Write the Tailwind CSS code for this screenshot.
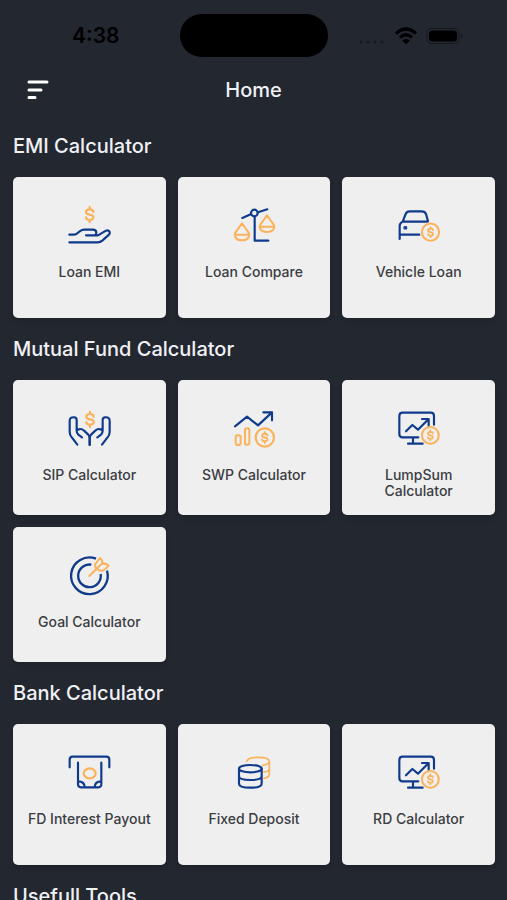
<!DOCTYPE html>
<html lang="en">
<head>
<meta charset="utf-8">
<meta name="viewport" content="width=device-width, initial-scale=1">
<title>Home</title>
<script src="https://cdn.jsdelivr.net/npm/@tailwindcss/browser@4"></script>
</head>
<body class="flex h-screen flex-col overflow-hidden bg-[#232730] font-['Inter','Liberation_Sans',sans-serif] text-[#f0f1f5]">

<!-- Shared symbols -->
<svg class="hidden" aria-hidden="true">
  <symbol id="dollar" viewBox="0 0 32 52">
    <path d="M16 3v7M16 42v7M27 18c0-5-4.500-8-11-8S5 13 5 18s4 7 11 8 11 3 11 8-4.500 8-11 8-11-3-11-8" fill="none" stroke="#fbb35b" stroke-width="6.500" stroke-linecap="round"/>
  </symbol>
  <symbol id="coin" viewBox="0 0 64 64">
    <circle cx="32" cy="32" r="27" fill="none" stroke="#fbb35b" stroke-width="6.500"/>
    <path d="M32 16v5M32 43v5M40 26c0-3-3-5-8-5s-8 2-8 5.500 3 4.500 8 5.500 8 2 8 5.500-3 5.500-8 5.500-8-2-8-5" fill="none" stroke="#fbb35b" stroke-width="5.500" stroke-linecap="round"/>
  </symbol>
  <symbol id="monitor" viewBox="51 27 132 132">
    <g fill="none" stroke="#103b8c" stroke-width="6.500" stroke-linecap="round" stroke-linejoin="round">
      <path d="M162 74V48q0-10-10-10H68q-10 0-10 10v54q0 10 10 10h47M99 112v19M84 131h44"/>
      <path d="M78 94l19-19 17 14 31-31M126 57h20v20"/>
    </g>
    <use href="#coin" x="121" y="76" width="60" height="60"/>
  </symbol>
</svg>

<div class="grid shrink-0 grid-cols-[1fr_148px_1fr] items-center pt-[14px] pb-[7px] text-black">
  <time class="pl-3 text-center text-[21px] leading-7 font-semibold">4:38</time>
  <div class="h-[43px] rounded-full bg-black"></div>
  <div class="flex items-center justify-center gap-2 pr-3">
    <svg class="mt-3 h-1 w-7" viewBox="0 0 28 4" fill="#15181e"><circle cx="3" cy="2" r="1.500"/><circle cx="10" cy="2" r="1.500"/><circle cx="17" cy="2" r="1.500"/><circle cx="24" cy="2" r="1.500"/></svg>
    <svg class="h-[18px] w-6" viewBox="0 0 24 18" role="img" aria-label="Wi-Fi"><path d="M2 6.500Q12-2.500 22 6.500M6 10.500Q12 5 18 10.500" fill="none" stroke="#000" stroke-width="3.200"/><path d="M8 13.500Q12 10.500 16 13.500L12 17.500Z"/></svg>
    <svg class="h-4 w-[38px]" viewBox="0 0 38 16" role="img" aria-label="Battery"><rect x="1" y=".5" width="32" height="15" rx="5" fill="none" stroke="#14171c"/><rect x="3" y="2.500" width="28" height="11" rx="3.500"/><path d="M35 5.500q3 2.500 0 5Z" fill="#14171c"/></svg>
  </div>
</div>

<header class="grid h-[51px] shrink-0 grid-cols-[40px_1fr_40px] items-center px-[18px]">
  <button type="button" aria-label="Menu" class="flex h-10 w-10 items-center justify-center">
    <svg class="h-5 w-[22px]" viewBox="0 0 22 20" fill="none" stroke="#fff" stroke-width="3" stroke-linecap="round"><path d="M2 2h18M2 10h12M2 17.500h6"/></svg>
  </button>
  <h1 class="text-center text-xl font-medium">Home</h1>
</header>

<main class="min-h-0 flex-1 overflow-y-auto pr-3 pl-[13px] [scrollbar-width:none]">
  <section>
    <h2 class="flex h-[62px] items-center text-xl font-medium">EMI Calculator</h2>
    <div class="grid auto-rows-[141px] grid-cols-3 gap-3 text-center text-sm leading-4 font-medium text-[#3b3d42]">
      <a href="#loan-emi" class="flex flex-col items-center gap-[14px] rounded-[5px] bg-[#efefef] px-2 pt-[29px] shadow-md">
        <svg class="size-11 shrink-0" viewBox="51 36 132 132" fill="none" stroke="#103b8c" stroke-width="6.500" stroke-linecap="round" stroke-linejoin="round">
          <use href="#dollar" x="103" y="36" width="32" height="52"/>
          <path d="M58 122h14q6 0 11-5l6-5q7-5 14-5h25q11 0 11 9t-11 8h-20M128 124h16l24-14q7-3 10 2t-1 10l-20 18q-6 5-14 5H58"/>
        </svg>
        <span>Loan EMI</span>
      </a>
      <a href="#loan-compare" class="flex flex-col items-center gap-[14px] rounded-[5px] bg-[#efefef] px-2 pt-[29px] shadow-md">
        <svg class="size-11 shrink-0" viewBox="51 36 132 132" fill="none" stroke="#103b8c" stroke-width="6.500" stroke-linecap="round" stroke-linejoin="round">
          <path d="M82 72l25-11M129 55l28-9M119 68v72h41"/><circle cx="118" cy="57" r="10"/>
          <g stroke="#fbb35b" stroke-width="6"><path d="M81 88L61 116q-4 7 0 13 5 10 20 10t20-10q4-6 0-13ZM61 122h40"/><path d="M156 64l-20 28q-4 7 0 13 5 9 20 9t20-9q4-6 0-13ZM136 98h40"/></g>
        </svg>
        <span>Loan Compare</span>
      </a>
      <a href="#vehicle-loan" class="flex flex-col items-center gap-[14px] rounded-[5px] bg-[#efefef] px-2 pt-[29px] shadow-md">
        <svg class="size-11 shrink-0" viewBox="51 36 132 132" fill="none" stroke="#103b8c" stroke-width="6.500" stroke-linecap="round" stroke-linejoin="round">
          <path d="M118 122H59M59 135V96q0-8 9-13l9-23q3-8 12-8h36q10 0 13 8l6 22M68 83h73"/>
          <rect x="73" y="98" width="7" height="7" fill="#103b8c" stroke-width="3"/>
          <use href="#coin" x="121" y="84" width="61" height="61"/>
        </svg>
        <span>Vehicle Loan</span>
      </a>
    </div>
  </section>

  <section>
    <h2 class="flex h-[62px] items-center text-xl font-medium">Mutual Fund Calculator</h2>
    <div class="grid auto-rows-[135px] grid-cols-3 gap-3 text-center text-sm leading-4 font-medium text-[#3b3d42]">
      <a href="#sip" class="flex flex-col items-center gap-[14px] rounded-[5px] bg-[#efefef] px-2 pt-[29px] shadow-md">
        <svg class="size-11 shrink-0" viewBox="51 27 132 132" fill="none" stroke="#103b8c" stroke-width="6.500" stroke-linecap="round" stroke-linejoin="round">
          <use href="#dollar" x="104" y="32" width="32" height="52"/>
          <path id="hand" d="M119 135v-20q0-7-5-12l-12-11q-8-7-14-4t-8-6V60q0-7-6-8-15-2-15 10v34q0 10 7 17l16 21M80 83v9q0 7 5 12l11 8"/>
          <use href="#hand" transform="matrix(-1 0 0 1 238 0)"/>
        </svg>
        <span>SIP Calculator</span>
      </a>
      <a href="#swp" class="flex flex-col items-center gap-[14px] rounded-[5px] bg-[#efefef] px-2 pt-[29px] shadow-md">
        <svg class="size-11 shrink-0" viewBox="51 27 132 132" fill="none" stroke="#103b8c" stroke-width="6.500" stroke-linecap="round" stroke-linejoin="round">
          <path d="M60 79l36-29 33 26 42-39M145 37h26v24"/>
          <rect x="62" y="106" width="15" height="29" rx="5" stroke="#fbb35b" stroke-width="6"/><rect x="90" y="85" width="13" height="49" rx="5" stroke="#fbb35b" stroke-width="6"/>
          <use href="#coin" x="117" y="80" width="65" height="65"/>
        </svg>
        <span>SWP Calculator</span>
      </a>
      <a href="#lumpsum" class="flex flex-col items-center gap-[14px] rounded-[5px] bg-[#efefef] px-8 pt-[29px] shadow-md">
        <svg class="size-11 shrink-0"><use href="#monitor"/></svg>
        <span>LumpSum Calculator</span>
      </a>
      <a href="#goal" class="flex flex-col items-center gap-[14px] rounded-[5px] bg-[#efefef] px-2 pt-[29px] shadow-md">
        <svg class="size-11 shrink-0 overflow-visible" viewBox="51 33 132 132" fill="none" stroke="#103b8c" stroke-width="7" stroke-linejoin="round">
          <path d="M138 41A55 55 0 1 0 171 77M124 59A34 34 0 1 0 152 87"/>
          <path d="M118 93l21-21M139 71q-7-10-1-17l12-15q8 6 7 17 12-1 19 6l-12 12q-8 8-25-3ZM139 71l17-15" stroke="#fbb35b" stroke-width="6" stroke-linecap="round"/>
        </svg>
        <span>Goal Calculator</span>
      </a>
    </div>
  </section>

  <section>
    <h2 class="flex h-[62px] items-center text-xl font-medium">Bank Calculator</h2>
    <div class="grid auto-rows-[141px] grid-cols-3 gap-3 text-center text-sm leading-4 font-medium text-[#3b3d42]">
      <a href="#fd-interest" class="flex flex-col items-center gap-[14px] rounded-[5px] bg-[#efefef] px-2 pt-[29px] shadow-md">
        <svg class="size-11 shrink-0" viewBox="51 33 132 132" fill="none" stroke="#103b8c" stroke-width="6.500" stroke-linecap="round" stroke-linejoin="round">
          <path d="M59 76V53q0-9 9-9h101q9 0 9 9v23M84 62v65q0 9 9 9h52q9 0 9-9V62M84 118q20 0 20 18M154 118q-20 0-20 18"/>
          <ellipse cx="119" cy="94" rx="18" ry="15" stroke="#fbb35b"/>
        </svg>
        <span>FD Interest Payout</span>
      </a>
      <a href="#fixed-deposit" class="flex flex-col items-center gap-[14px] rounded-[5px] bg-[#efefef] px-2 pt-[29px] shadow-md">
        <svg class="size-11 shrink-0" viewBox="51 33 132 132" fill="none" stroke="#103b8c" stroke-width="6.500" stroke-linecap="round">
          <path d="M95 58q4-12 33-12 35 0 35 12v39q0 10-16 12M163 58q0 9-20 12M163 80q0 8-16 10" stroke="#fbb35b" stroke-width="5"/>
          <ellipse cx="106" cy="80" rx="34" ry="11"/><path d="M72 80v45q0 12 34 12t34-12V80M72 103q0 11 34 11t34-11"/>
        </svg>
        <span>Fixed Deposit</span>
      </a>
      <a href="#rd" class="flex flex-col items-center gap-[14px] rounded-[5px] bg-[#efefef] px-2 pt-[29px] shadow-md">
        <svg class="size-11 shrink-0"><use href="#monitor"/></svg>
        <span>RD Calculator</span>
      </a>
    </div>
  </section>

  <section>
    <h2 class="flex h-[62px] items-center text-xl font-medium">Usefull Tools</h2>
  </section>
</main>
</body>
</html>
